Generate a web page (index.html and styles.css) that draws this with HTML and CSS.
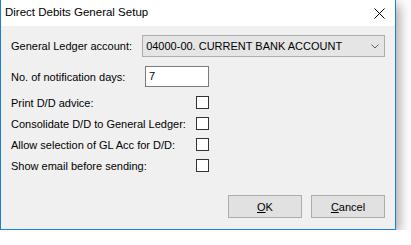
FILE: index.html
```html
<!DOCTYPE html>
<html>
<head>
<meta charset="utf-8">
<link rel="stylesheet" href="styles.css">
</head>
<body>
<div class="window">
  <div class="titlebar">
    <span class="title">Direct Debits General Setup</span>
    <svg class="close" width="11" height="11" viewBox="0 0 11 11"><path d="M0.5 0.5 L10.5 10.5 M10.5 0.5 L0.5 10.5" stroke="#000" stroke-width="1" fill="none"/></svg>
  </div>
  <div class="body">
    <div class="row row-combo">
      <span class="label wide">General Ledger account:</span>
      <div class="combo">
        <span>04000-00. CURRENT BANK ACCOUNT</span>
        <svg width="8" height="5" viewBox="0 0 8 5"><path d="M0.5 0.5 L4 4 L7.5 0.5" stroke="#606060" stroke-width="1" fill="none"/></svg>
      </div>
    </div>
    <div class="row row-text">
      <span class="label wide">No. of notification days:</span>
      <div class="textbox">7</div>
    </div>
    <div class="checks">
      <div class="row row-check"><span class="label long">Print D/D advice:</span><span class="check"></span></div>
      <div class="row row-check"><span class="label long">Consolidate D/D to General Ledger:</span><span class="check"></span></div>
      <div class="row row-check"><span class="label long">Allow selection of GL Acc for D/D:</span><span class="check"></span></div>
      <div class="row row-check"><span class="label long">Show email before sending:</span><span class="check"></span></div>
    </div>
    <div class="buttons">
      <div class="btn"><u>O</u>K</div>
      <div class="btn"><u>C</u>ancel</div>
    </div>
  </div>
</div>
</body>
</html>
```
FILE: styles.css
```css
html, body {
  margin: 0;
  padding: 0;
  background: #ffffff;
}
body {
  font-family: "Liberation Sans", Arial, sans-serif;
  font-size: 11px;
  color: #000;
}
.window {
  width: 394px;
  height: 229px;
  border: 1px solid #1c7ed6;
  border-top: none;
  background: #f0f0f0;
  box-shadow: 3px 4px 12px rgba(0, 0, 0, 0.38);
  display: flex;
  flex-direction: column;
}
.titlebar {
  height: 26px;
  background: #ffffff;
  display: flex;
  align-items: center;
  justify-content: space-between;
  padding: 0 10px 0 4px;
}
.title {
  font-family: "Liberation Sans", Arial, sans-serif;
  font-size: 11.5px;
  position: relative;
  top: -1px;
}
.close {
  display: block;
}
.body {
  flex: 1;
  padding: 9px 10px 11px 10px;
  display: flex;
  flex-direction: column;
}
.row {
  display: flex;
  align-items: center;
}
.label.wide {
  width: 134px;
}
.label.long {
  width: 185px;
}
.combo {
  width: 238px;
  height: 20px;
  border: 1px solid #adadad;
  background: #e5e5e5;
  display: flex;
  align-items: center;
  justify-content: space-between;
  padding: 0 5px 0 3px;
  box-sizing: content-box;
}
.row-text {
  margin-top: 9px;
}
.textbox {
  width: 59px;
  height: 19px;
  border: 1px solid #7a7a7a;
  background: #ffffff;
  padding-left: 3px;
  line-height: 19px;
}
.checks {
  margin-top: 9px;
  display: flex;
  flex-direction: column;
  gap: 8px;
}
.row-check {
  height: 13px;
}
.check {
  width: 11px;
  height: 11px;
  border: 1px solid #333333;
  background: #ffffff;
}
.buttons {
  margin-top: auto;
  display: flex;
  justify-content: flex-end;
  gap: 9px;
}
.btn {
  width: 72px;
  height: 21px;
  border: 1px solid #adadad;
  background: #e1e1e1;
  display: flex;
  align-items: center;
  justify-content: center;
}
```
